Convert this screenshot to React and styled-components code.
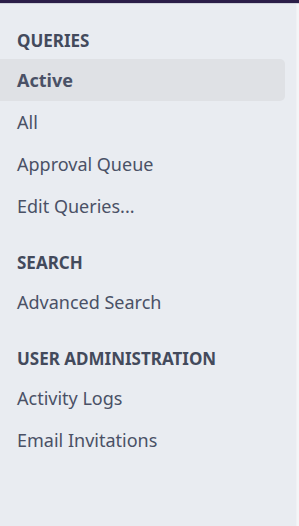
import React from "react";
import styled, { createGlobalStyle } from "styled-components";

const GlobalStyle = createGlobalStyle`
  html, body {
    margin: 0;
    padding: 0;
    background: #f4f5f7;
  }
  * {
    box-sizing: border-box;
  }
`;

const Page = styled.div`
  display: flex;
  flex-direction: column;
  min-height: 100vh;
  font-family: "Noto Sans", "Open Sans", sans-serif;
`;

const TopBar = styled.div`
  height: 4px;
  background: #2b1e48;
  border-bottom: 1px solid #cfd2db;
`;

const Wrapper = styled.nav`
  width: 297px;
  flex: 1;
  background: #e9ecf1;
  border-right: 1px solid #f0f1f4;
  padding: 27px 11px 0 0;
  display: flex;
  flex-direction: column;
  gap: 26px;
`;

const Section = styled.div`
  display: flex;
  flex-direction: column;
`;

const SectionTitle = styled.div`
  height: 20px;
  line-height: 20px;
  margin: 0 0 8px 17px;
  font-size: 17px;
  font-weight: 700;
  color: #434a5c;
`;

const MenuList = styled.ul`
  list-style: none;
  margin: 0;
  padding: 0;
`;

const MenuItem = styled.li`
  height: 42px;
  display: flex;
  align-items: center;
  padding-left: 17px;
  border-radius: ${(p) => (p.$active ? "0 5px 5px 0" : "0")};
  background: ${(p) => (p.$active ? "#dfe1e5" : "transparent")};
  color: #4a5166;
  font-size: 18px;
  font-weight: ${(p) => (p.$active ? 700 : 400)};
  cursor: pointer;
`;

const sections = [
  {
    title: "QUERIES",
    items: [
      { label: "Active", active: true },
      { label: "All" },
      { label: "Approval Queue" },
      { label: "Edit Queries..." },
    ],
  },
  { title: "SEARCH", items: [{ label: "Advanced Search" }] },
  {
    title: "USER ADMINISTRATION",
    items: [{ label: "Activity Logs" }, { label: "Email Invitations" }],
  },
];

const App = () => {
  return (
    <>
      <GlobalStyle />
      <Page>
        <TopBar />
        <Wrapper>
          {sections.map((s) => (
            <Section key={s.title}>
              <SectionTitle>{s.title}</SectionTitle>
              <MenuList>
                {s.items.map((it) => (
                  <MenuItem key={it.label} $active={it.active}>
                    {it.label}
                  </MenuItem>
                ))}
              </MenuList>
            </Section>
          ))}
        </Wrapper>
      </Page>
    </>
  );
};

export default App;
